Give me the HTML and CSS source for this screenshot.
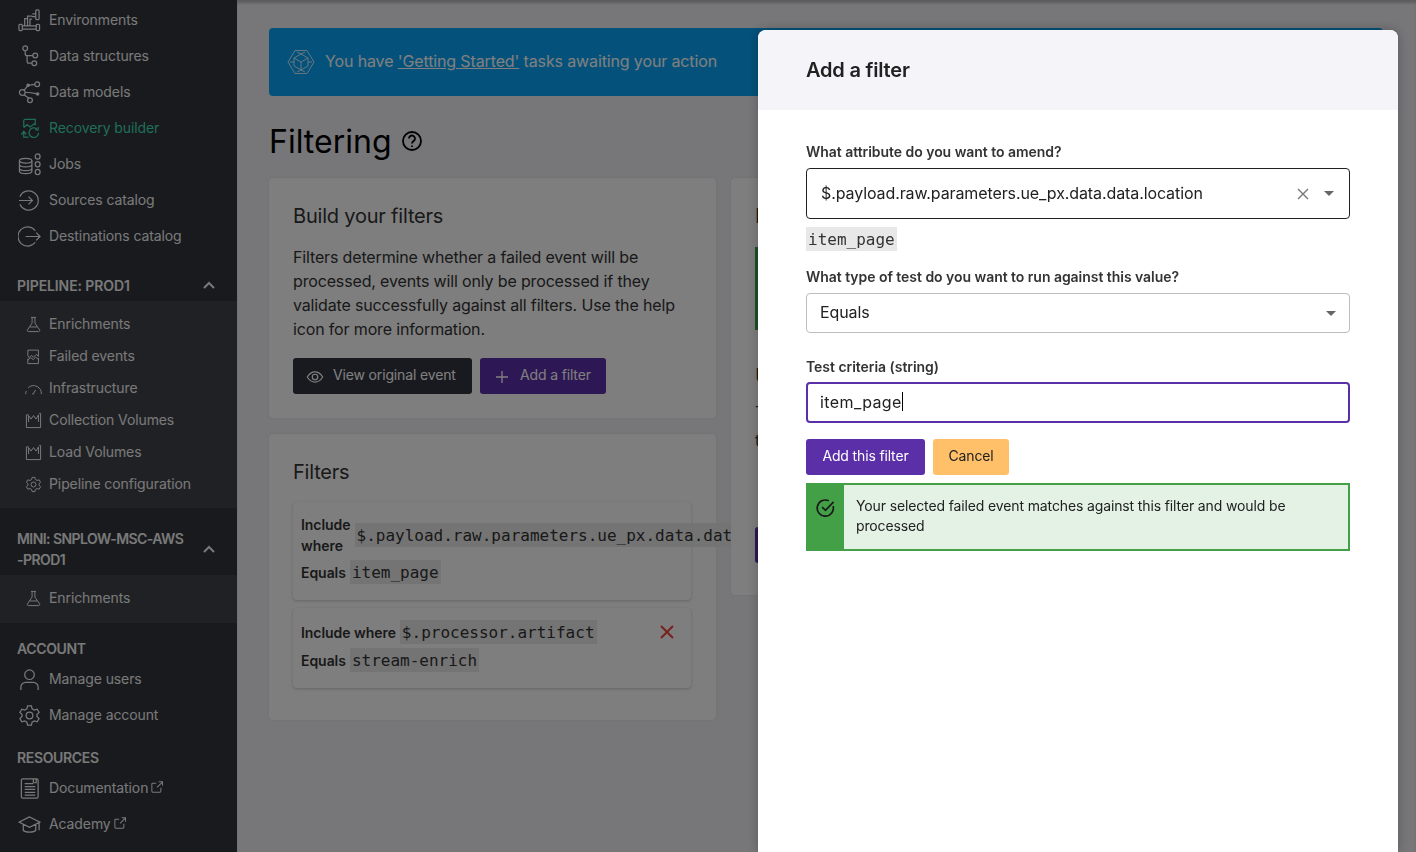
FILE: index.html
```html
<!DOCTYPE html>
<html>

<head>
    <meta charset="utf-8">
    <title>Filtering</title>
    <link rel="stylesheet" href="styles.css">
</head>

<body>
    <svg class="sprites" width="0" height="0">
        <symbol id="i-flask" viewBox="0 0 24 24"><path d="M8.500 2h7M10 2v8L3.500 19.500c-.8 1.400 0 2.500 1.500 2.500h14c1.500 0 2.300-1.100 1.500-2.500L14 10V2M7 15.500h10"/></symbol>
        <symbol id="i-chart" viewBox="0 0 24 24"><path d="M5 4H2v18h20V2h-2M5 14V5l3.500 5L12 5l3.500 5L19 4v10"/></symbol>
        <symbol id="i-gear" viewBox="0 0 24 24"><path d="M10 2h4l.7 3 2.300 1.300 3-.9 2 3.400-2.200 2.100v2.200l2.200 2.100-2 3.400-3-.9-2.300 1.300-.7 3h-4l-.7-3L7 17.700l-3 .9-2-3.400 2.200-2.100v-2.200L2 8.800l2-3.400 3 .9L9.300 5z"/><circle cx="12" cy="12" r="3.500"/></symbol>
        <symbol id="i-ext" viewBox="0 0 14 14"><path d="M6 2.500H2a1 1 0 0 0-1 1V12a1 1 0 0 0 1 1h8.500a1 1 0 0 0 1-1V8M7 7.500 13 1.500M9 1h4.500v4.500"/></symbol>
    </svg>

    <div class="app">
        <nav class="sidebar">
            <ul class="nav-list">
                <li class="nav-item"><svg class="nav-icon" viewBox="0 0 24 24"><rect x="1" y="16" width="3.500" height="6.500" rx="1"/><rect x="19" y="16" width="3.500" height="6.500" rx="1"/><path d="M4.500 17.500h14.500M4.500 21h14.500M7 17.500V10h3.500M10 17.500V7.500h5M12.500 17.500V10.500h2"/><rect x="18.500" y="1" width="3.500" height="10" rx="1"/><path d="M15 5h3.500M14.500 8h4"/></svg>Environments</li>
                <li class="nav-item"><svg class="nav-icon" viewBox="0 0 24 24"><circle cx="7.500" cy="3.500" r="2.500"/><circle cx="18" cy="11" r="2.500"/><circle cx="17" cy="19" r="2.500"/><path d="M7.500 6v3a2 2 0 0 0 2 2h6M9.500 11v6a2 2 0 0 0 2 2h3"/></svg>Data structures</li>
                <li class="nav-item"><svg class="nav-icon" viewBox="0 0 24 24"><circle cx="4.500" cy="12" r="3"/><circle cx="20" cy="3.500" r="2.500"/><circle cx="12.500" cy="20" r="2.500"/><circle cx="10.500" cy="4.500" r="1.200" fill="currentColor"/><circle cx="20.500" cy="13.500" r="1.200" fill="currentColor"/><path d="M6.500 9.500l4-5 7-1M7.500 12h4l9 1.500M6.500 14.500l5 3.500"/></svg>Data models</li>
                <li class="nav-item nav-item-active"><svg class="nav-icon" viewBox="0 0 24 24"><path d="M6 11V4a1.500 1.500 0 0 1 1.500-1.500H18v6M6 11l3.500-3 3 2.500L18 6.500M6 15v6h5M3.500 18.500 6 15l2.500 3M21.500 16.500a5 5 0 1 1-1.800-4M21 10.500v3h-3"/></svg>Recovery builder</li>
                <li class="nav-item"><svg class="nav-icon" viewBox="0 0 24 24"><ellipse cx="8" cy="8" rx="6.500" ry="2.500"/><path d="M1.500 8v11c0 1.400 3 2.500 6.500 2.500s6.500-1.100 6.500-2.500V8M1.500 12c0 1.400 3 2.500 6.500 2.500s6.500-1.100 6.500-2.500M1.500 16c0 1.400 3 2.500 6.500 2.500s6.500-1.100 6.500-2.500"/><rect x="18" y="1" width="5" height="5.500" rx="2.500"/><rect x="18" y="9" width="5" height="5.500" rx="2.500"/><rect x="18" y="17" width="5" height="5.500" rx="2.500"/></svg>Jobs</li>
                <li class="nav-item"><svg class="nav-icon" viewBox="0 0 24 24"><path d="M2 8a10 10 0 1 1 0 8M1 12h14M11 8l4 4-4 4"/></svg>Sources catalog</li>
                <li class="nav-item"><svg class="nav-icon" viewBox="0 0 24 24"><path d="M18 6a10 10 0 1 0 0 12M8 12h15M19 8l4 4-4 4"/></svg>Destinations catalog</li>
            </ul>

            <div class="nav-head">
                <span>PIPELINE: PROD1</span>
                <svg class="nav-chevron" viewBox="0 0 12 8"><path d="M1 7l5-5 5 5"/></svg>
            </div>
            <ul class="nav-sub">
                <li class="nav-item"><svg class="nav-icon-sm" viewBox="0 0 24 24"><use href="#i-flask"/></svg>Enrichments</li>
                <li class="nav-item"><svg class="nav-icon-sm" viewBox="0 0 24 24"><path d="M4 11V3h15v9l-3-3-4 4-3-2.500-3 3zM4 15v7h15v-8M4 17l4-3.500 3.500 3L15 13l4 3"/></svg>Failed events</li>
                <li class="nav-item"><svg class="nav-icon-sm" viewBox="0 0 24 24"><path d="M1 20a11 11 0 0 1 1-4.500M4.500 11a11 11 0 0 1 18.500 9M12 19l3-5M10 19.500h3"/></svg>Infrastructure</li>
                <li class="nav-item"><svg class="nav-icon-sm" viewBox="0 0 24 24"><use href="#i-chart"/></svg>Collection Volumes</li>
                <li class="nav-item"><svg class="nav-icon-sm" viewBox="0 0 24 24"><use href="#i-chart"/></svg>Load Volumes</li>
                <li class="nav-item"><svg class="nav-icon-sm" viewBox="0 0 24 24"><use href="#i-gear"/></svg>Pipeline configuration</li>
            </ul>

            <div class="nav-head nav-head-tall">
                <span>MINI: SNPLOW-MSC-AWS<br>-PROD1</span>
                <svg class="nav-chevron" viewBox="0 0 12 8"><path d="M1 7l5-5 5 5"/></svg>
            </div>
            <ul class="nav-sub nav-sub-last">
                <li class="nav-item"><svg class="nav-icon-sm" viewBox="0 0 24 24"><use href="#i-flask"/></svg>Enrichments</li>
            </ul>

            <div class="nav-title">ACCOUNT</div>
            <ul class="nav-list">
                <li class="nav-item"><svg class="nav-icon" viewBox="0 0 24 24"><circle cx="12" cy="7" r="5"/><path d="M3 23v-3a5 5 0 0 1 5-5h8a5 5 0 0 1 5 5v3"/></svg>Manage users</li>
                <li class="nav-item"><svg class="nav-icon" viewBox="0 0 24 24"><use href="#i-gear"/></svg>Manage account</li>
            </ul>

            <div class="nav-title">RESOURCES</div>
            <ul class="nav-list">
                <li class="nav-item"><svg class="nav-icon" viewBox="0 0 24 24"><path d="M5 2h14.500a1.500 1.500 0 0 1 1.500 1.500v17a1.500 1.500 0 0 1-1.500 1.500H5a1.500 1.500 0 0 1-1.500-1.500v-17A1.500 1.500 0 0 1 5 2zM7 7h9M7 10h11M7 13h11M7 16h11M7 19h11M16 2v4h3V2"/></svg><span>Documentation</span><svg class="nav-ext" viewBox="0 0 14 14"><use href="#i-ext"/></svg></li>
                <li class="nav-item"><svg class="nav-icon" viewBox="0 0 24 24"><path d="M12 4 1 9.500 12 15l11-5.500zM5.500 12v6c2 2.500 11 2.500 13 0v-6M22 10v8"/></svg><span>Academy</span><svg class="nav-ext" viewBox="0 0 14 14"><use href="#i-ext"/></svg></li>
            </ul>
        </nav>

        <main class="main">
            <div class="banner">
                <svg class="banner-icon" viewBox="0 0 28 28"><path d="M8 2.500h12L27 14l-7 11.500H8L1 14zM14 6l7 4v8l-7 4-7-4v-8zM7 10l7 4 7-4M14 14v8M3 14h4M21 14h4M10 4l4 2 4-2M10 24l4-2 4 2"/></svg>
                <span>You have <a class="banner-link">'Getting Started'</a> tasks awaiting your action</span>
            </div>

            <h1 class="page-title">Filtering
                <svg class="help-icon" viewBox="0 0 22 22"><circle cx="11" cy="11" r="9"/><path d="M8 8.500a3 3 0 1 1 4.500 2.600c-1 .6-1.500 1.100-1.500 2.400M11 15.500v1.500"/></svg>
            </h1>

            <div class="columns">
                <div class="col-left">
                    <section class="card card-build">
                        <h2 class="card-title">Build your filters</h2>
                        <p class="card-text">Filters determine whether a failed event will be processed, events will only be processed if they validate successfully against all filters. Use the help icon for more information.</p>
                        <div class="btn-row">
                            <button class="btn btn-dark"><svg class="btn-icon-eye" viewBox="0 0 20 14"><path d="M1 7c2.500-4 5.500-6 9-6s6.500 2 9 6c-2.500 4-5.500 6-9 6S3.500 11 1 7z"/><circle cx="10" cy="7" r="3.200"/></svg>View original event</button>
                            <button class="btn btn-purple"><svg class="btn-icon-plus" viewBox="0 0 12 12"><path d="M6 0v12M0 6h12"/></svg>Add a filter</button>
                        </div>
                    </section>

                    <section class="card card-filters">
                        <h2 class="card-title">Filters</h2>
                        <div class="filter">
                            <div class="filter-row filter-row-tall">
                                <b class="filter-key filter-key-wrap">Include where</b>
                                <code class="code code-long">$.payload.raw.parameters.ue_px.data.data.location</code>
                            </div>
                            <div class="filter-row">
                                <b class="filter-key">Equals</b>
                                <code class="code">item_page</code>
                            </div>
                        </div>
                        <div class="filter">
                            <div class="filter-row">
                                <b class="filter-key">Include where</b>
                                <code class="code">$.processor.artifact</code>
                                <svg class="filter-remove" viewBox="0 0 14 14"><path d="M1 1l12 12M13 1 1 13"/></svg>
                            </div>
                            <div class="filter-row">
                                <b class="filter-key">Equals</b>
                                <code class="code">stream-enrich</code>
                            </div>
                        </div>
                    </section>
                </div>

                <section class="card card-side">
                    <h2 class="card-title">Event</h2>
                    <div class="side-alert"></div>
                    <h2 class="card-title side-title">Use</h2>
                    <p class="card-text side-text">The<br>to</p>
                    <div class="side-button"></div>
                </section>
            </div>
        </main>
    </div>

    <div class="overlay">
        <div class="modal">
            <header class="modal-header">Add a filter</header>
            <div class="modal-body">
                <label class="field-label">What attribute do you want to amend?</label>
                <div class="select select-open">
                    <span class="select-value">$.payload.raw.parameters.ue_px.data.data.location</span>
                    <svg class="select-clear" viewBox="0 0 12 12"><path d="M1 1l10 10M11 1 1 11"/></svg>
                    <span class="select-arrow"></span>
                </div>
                <div class="value-preview"><code class="code code-modal">item_page</code></div>

                <label class="field-label">What type of test do you want to run against this value?</label>
                <div class="select">
                    <span class="select-value">Equals</span>
                    <span class="select-arrow"></span>
                </div>

                <label class="field-label field-label-gap">Test criteria (string)</label>
                <div class="text-input">item_page<span class="caret"></span></div>

                <div class="modal-actions">
                    <button class="btn btn-submit">Add this filter</button>
                    <button class="btn btn-cancel">Cancel</button>
                </div>

                <div class="alert">
                    <div class="alert-side">
                        <svg class="alert-icon" viewBox="0 0 20 20"><path d="M18 8.500A8.500 8.500 0 1 1 13.500 3M6.500 9.500l3.500 3.500 8.500-9"/></svg>
                    </div>
                    <p class="alert-text">Your selected failed event matches against this filter and would be processed</p>
                </div>
            </div>
        </div>
    </div>
</body>

</html>
```

FILE: styles.css
```css
* {
    box-sizing: border-box;
}

body {
    margin: 0;
    height: 100vh;
    overflow: hidden;
    font-family: Inter, "Liberation Sans", sans-serif;
    font-size: 14px;
    letter-spacing: -0.15px;
    color: #212121;
    background-color: #eeeef3;
}

.sprites {
    position: absolute;
}

ul {
    list-style: none;
    margin: 0;
    padding: 0;
}

svg {
    fill: none;
    stroke: currentColor;
    flex-shrink: 0;
}

.app {
    display: flex;
    height: 100vh;
}

/* sidebar */
.sidebar {
    width: 237px;
    flex-shrink: 0;
    padding-top: 2px;
    background-color: #31343b;
    color: #f2f2f2;
    letter-spacing: -0.1px;
}

.nav-list .nav-item {
    height: 36px;
}

.nav-item {
    display: flex;
    align-items: center;
    height: 32px;
    padding: 0 0 2px 18px;
}

.nav-icon {
    width: 23px;
    height: 23px;
    margin: 2px 8px 0 0;
    stroke-width: 1.3;
}

.nav-icon-sm {
    width: 17px;
    height: 17px;
    margin: 2px 7px 0 7px;
    stroke-width: 1.4;
}

.nav-item-active {
    color: #3fdcae;
}

.nav-ext {
    width: 12px;
    height: 12px;
    margin: 0 0 0 3px;
    stroke-width: 1.2;
}

.nav-head {
    display: flex;
    align-items: center;
    justify-content: space-between;
    height: 47px;
    padding: 15px 22px 0 17px;
    font-weight: 600;
    letter-spacing: -0.1px;
}

.nav-head-tall {
    height: 67px;
    line-height: 21px;
    letter-spacing: -0.55px;
}

.nav-chevron {
    width: 12px;
    height: 8px;
    stroke-width: 2;
}

.nav-sub {
    padding: 7px 0 8px;
    background-color: #40434a;
}

.nav-sub-last {
    padding-bottom: 9px;
}

.nav-title {
    padding: 16px 17px 0;
    height: 37px;
    font-weight: 600;
    letter-spacing: -0.35px;
}

.nav-sub + .nav-title {
    height: 38px;
    padding-top: 17px;
}

/* main area */
.main {
    flex: 1;
    min-width: 0;
    padding: 28px 33px 0 32px;
    overflow: hidden;
    box-shadow: inset 0 4px 3px -1px #b8b8b8;
}

.banner {
    display: flex;
    align-items: center;
    height: 68px;
    padding: 0 0 2px 18px;
    border-radius: 4px;
    background-color: #09a4f6;
    color: #ffffff;
    font-size: 16px;
    letter-spacing: -0.13px;
}

.banner-icon {
    width: 28px;
    height: 28px;
    margin: 2px 10px 0 0;
    stroke-width: 0.8;
}

.banner-link {
    text-decoration: underline;
}

.page-title {
    display: flex;
    align-items: center;
    gap: 9px;
    height: 82px;
    margin: 0;
    padding-top: 8px;
    font-size: 32px;
    font-weight: 400;
    letter-spacing: 0;
    color: #000000;
}

.help-icon {
    width: 22px;
    height: 22px;
    stroke-width: 1.8;
}

.columns {
    display: flex;
    align-items: flex-start;
    gap: 15px;
}

.col-left {
    width: 447px;
    flex-shrink: 0;
}

.card {
    position: relative;
    padding: 24px;
    border-radius: 4px;
    background-color: #fcfcfc;
    box-shadow: 0 0 2px rgba(0, 0, 0, 0.1);
}

.card-title {
    margin: 0;
    font-size: 20px;
    line-height: 28px;
    font-weight: 400;
    letter-spacing: -0.2px;
    color: #333333;
}

.card-text {
    margin: 15px 0 0;
    font-size: 16px;
    line-height: 24px;
    letter-spacing: -0.15px;
    color: #333333;
}

.card-build {
    height: 240px;
    margin-bottom: 16px;
}

.btn-row {
    display: flex;
    gap: 8px;
    margin-top: 17px;
}

.btn {
    display: flex;
    align-items: center;
    height: 36px;
    padding-bottom: 4px;
    border: none;
    border-radius: 3px;
    font-family: inherit;
    font-size: 14px;
    letter-spacing: -0.15px;
}

.btn-dark {
    width: 179px;
    padding-left: 13px;
    background-color: #30343e;
    color: #ffffff;
}

.btn-purple {
    width: 126px;
    padding-left: 16px;
    background-color: #5b2fa8;
    color: #ffffff;
}

.btn-icon-eye {
    width: 18px;
    height: 12px;
    margin: 4px 9px 0 0;
    stroke-width: 1.4;
}

.btn-icon-plus {
    width: 12px;
    height: 12px;
    margin: 4px 12px 0 0;
    stroke-width: 1.3;
}

.card-filters {
    height: 286px;
}

.card-filters .card-title {
    margin-bottom: 16px;
}

.filter {
    position: relative;
    width: 398px;
    margin-bottom: 8px;
    padding: 10px 8px 14px;
    border-radius: 4px;
    background-color: #fcfcfc;
    box-shadow: 0 1px 3px rgba(0, 0, 0, 0.2);
}

.filter-row {
    display: flex;
    align-items: center;
    gap: 4px;
    height: 28px;
    white-space: nowrap;
}

.filter-row-tall {
    height: 46px;
}

.filter-key {
    font-weight: 600;
    line-height: 21px;
    letter-spacing: -0.05px;
    color: #333333;
}

.filter-key-wrap {
    width: 50px;
    white-space: normal;
}

.filter-remove {
    position: absolute;
    right: 17px;
    top: 17px;
    width: 14px;
    height: 14px;
    stroke-width: 2;
    color: #f04040;
}

.code {
    display: inline-block;
    padding: 0 2px;
    height: 24px;
    font-family: "DejaVu Sans Mono", monospace;
    font-size: 16px;
    line-height: 26px;
    letter-spacing: 0;
    color: #333333;
    background-color: #e8e8e8;
}

.card-side {
    flex: 1;
    height: 417px;
    min-width: 0;
    z-index: 1;
}

.side-alert {
    height: 83px;
    margin-top: 17px;
    background-color: #43a047;
}

.side-title {
    margin-top: 32px;
}

.side-text {
    margin-top: 8px;
    line-height: 28px;
}

.side-button {
    width: 120px;
    height: 36px;
    margin-top: 73px;
    border-radius: 3px;
    background-color: #5b2fa8;
}

/* modal */
.overlay {
    position: fixed;
    top: 0;
    left: 0;
    right: 0;
    bottom: 0;
    z-index: 10;
    display: flex;
    justify-content: flex-end;
    padding: 30px 18px 0 0;
    background-color: rgba(0, 0, 0, 0.5);
}

.modal {
    width: 640px;
    border-radius: 8px 8px 0 0;
    background-color: #ffffff;
    box-shadow: 0 0 12px rgba(0, 0, 0, 0.25);
}

.modal-header {
    display: flex;
    align-items: center;
    height: 80px;
    padding-left: 48px;
    border-radius: 8px 8px 0 0;
    background-color: #f4f4f9;
    font-size: 20px;
    font-weight: 600;
    letter-spacing: -0.2px;
    color: #212121;
}

.modal-body {
    padding: 32px 48px 0;
}

.field-label {
    display: block;
    height: 26px;
    line-height: 20px;
    font-weight: 600;
    letter-spacing: -0.04px;
    color: #333333;
}

.field-label-gap {
    margin-top: 23px;
    line-height: 22px;
}

.select {
    display: flex;
    align-items: center;
    height: 40px;
    padding: 0 13px 2px;
    border: 1px solid #bdbdbd;
    border-radius: 4px;
    font-size: 16px;
    letter-spacing: -0.1px;
}

.select-open {
    height: 51px;
    padding: 0 15px 2px 14px;
    border-color: #212121;
}

.select-value {
    flex: 1;
}

.select-clear {
    width: 12px;
    height: 12px;
    margin: 2px 15px 0 0;
    stroke-width: 1.4;
    color: #777777;
}

.select-arrow {
    width: 0;
    height: 0;
    margin-top: 2px;
    border-left: 5px solid transparent;
    border-right: 5px solid transparent;
    border-top: 5px solid #666666;
}

.value-preview {
    height: 48px;
    padding-top: 8px;
}

.text-input {
    display: flex;
    align-items: center;
    height: 41px;
    padding: 0 0 2px 12px;
    border: 2px solid #5b2fa8;
    border-radius: 4px;
    font-size: 16px;
    letter-spacing: 0.4px;
}

.caret {
    width: 1px;
    height: 19px;
    background-color: #000000;
}

.modal-actions {
    display: flex;
    gap: 8px;
    margin-top: 16px;
}

.btn-submit {
    width: 119px;
    justify-content: center;
    background-color: #5b2fa8;
    color: #ffffff;
}

.btn-cancel {
    width: 76px;
    justify-content: center;
    background-color: #ffc069;
    color: #212121;
}

.alert {
    display: flex;
    height: 68px;
    margin-top: 8px;
    border: 2px solid #43a047;
    background-color: #e3f2e5;
}

.alert-side {
    width: 36px;
    flex-shrink: 0;
    padding: 13px 0 0 8px;
    background-color: #43a047;
}

.alert-icon {
    display: block;
    width: 19px;
    height: 19px;
    stroke-width: 1.8;
    color: #1a1a1a;
}

.alert-text {
    margin: 0;
    padding: 11px 40px 0 12px;
    line-height: 20px;
    letter-spacing: -0.13px;
    color: #212121;
}
```
